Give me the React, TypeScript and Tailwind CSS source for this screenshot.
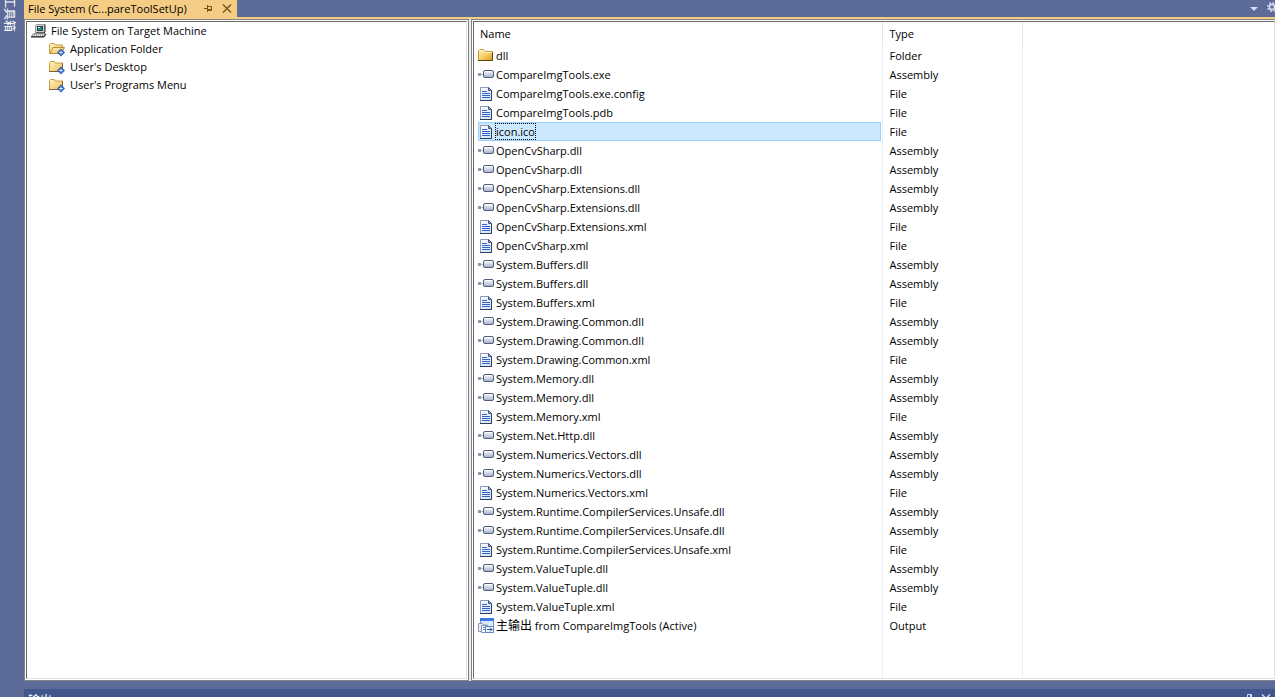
import type { ReactNode } from "react"

type Kind = "folder" | "assembly" | "file" | "output"

interface Item {
  name: ReactNode
  kind: Kind
  selected?: boolean
}

const typeLabels: Record<Kind, string> = {
  folder: "Folder",
  assembly: "Assembly",
  file: "File",
  output: "Output",
}

const items: Item[] = [
  { name: "dll", kind: "folder" },
  { name: "CompareImgTools.exe", kind: "assembly" },
  { name: "CompareImgTools.exe.config", kind: "file" },
  { name: "CompareImgTools.pdb", kind: "file" },
  { name: "icon.ico", kind: "file", selected: true },
  { name: "OpenCvSharp.dll", kind: "assembly" },
  { name: "OpenCvSharp.dll", kind: "assembly" },
  { name: "OpenCvSharp.Extensions.dll", kind: "assembly" },
  { name: "OpenCvSharp.Extensions.dll", kind: "assembly" },
  { name: "OpenCvSharp.Extensions.xml", kind: "file" },
  { name: "OpenCvSharp.xml", kind: "file" },
  { name: "System.Buffers.dll", kind: "assembly" },
  { name: "System.Buffers.dll", kind: "assembly" },
  { name: "System.Buffers.xml", kind: "file" },
  { name: "System.Drawing.Common.dll", kind: "assembly" },
  { name: "System.Drawing.Common.dll", kind: "assembly" },
  { name: "System.Drawing.Common.xml", kind: "file" },
  { name: "System.Memory.dll", kind: "assembly" },
  { name: "System.Memory.dll", kind: "assembly" },
  { name: "System.Memory.xml", kind: "file" },
  { name: "System.Net.Http.dll", kind: "assembly" },
  { name: "System.Numerics.Vectors.dll", kind: "assembly" },
  { name: "System.Numerics.Vectors.dll", kind: "assembly" },
  { name: "System.Numerics.Vectors.xml", kind: "file" },
  { name: "System.Runtime.CompilerServices.Unsafe.dll", kind: "assembly" },
  { name: "System.Runtime.CompilerServices.Unsafe.dll", kind: "assembly" },
  { name: "System.Runtime.CompilerServices.Unsafe.xml", kind: "file" },
  { name: "System.ValueTuple.dll", kind: "assembly" },
  { name: "System.ValueTuple.dll", kind: "assembly" },
  { name: "System.ValueTuple.xml", kind: "file" },
  {
    name: (
      <>
        <span className="text-xs leading-[17px]">主输出</span> from CompareImgTools (Active)
      </>
    ),
    kind: "output",
  },
]

const treeFolders = ["Application Folder", "User's Desktop", "User's Programs Menu"]

// Shared gradients, referenced by id from the icons
function IconDefs() {
  return (
    <svg width="0" height="0" className="absolute" aria-hidden="true">
      <defs>
        <linearGradient id="gold" x1="0" y1="0" x2="1" y2="1">
          <stop offset="0" stopColor="#fff0ae" />
          <stop offset="0.5" stopColor="#f6d067" />
          <stop offset="1" stopColor="#d99a1c" />
        </linearGradient>
        <linearGradient id="pale" x1="0" y1="0" x2="1" y2="1">
          <stop offset="0" stopColor="#fff3c0" />
          <stop offset="1" stopColor="#efc050" />
        </linearGradient>
        <linearGradient id="steel" x1="0" y1="0" x2="0" y2="1">
          <stop offset="0" stopColor="#ffffff" />
          <stop offset="1" stopColor="#a3aec6" />
        </linearGradient>
        <linearGradient id="sheet" x1="0" y1="0" x2="1" y2="1">
          <stop offset="0" stopColor="#ffffff" />
          <stop offset="1" stopColor="#d3dff3" />
        </linearGradient>
      </defs>
    </svg>
  )
}

function Icon({ children }: { children: ReactNode }) {
  return (
    <svg width="16" height="16" viewBox="0 0 16 16" className="shrink-0" aria-hidden="true">
      {children}
    </svg>
  )
}

function FolderIcon() {
  return (
    <Icon>
      <path d="M0.500 12.500v-10l1-1h4l1.500 2h7.500v9z" fill="url(#gold)" stroke="#c39a42" />
      <path d="M1 3h5l1 1.500h7" fill="none" stroke="#fff5cf" />
      <path d="M0 12.500h14.500V4" fill="none" stroke="#5d4516" />
    </Icon>
  )
}

function AssemblyIcon() {
  return (
    <Icon>
      <path d="M0 6h3v3H0z" fill="#8f9ab2" />
      <path d="M3 7.500h2" stroke="#b3bccd" />
      <rect x="5.500" y="3.500" width="10" height="7" rx="1.500" fill="url(#steel)" stroke="#4f5d7c" />
      <path d="M7 4.500h7" stroke="#fff" />
    </Icon>
  )
}

function FileIcon() {
  return (
    <Icon>
      <path d="M2.500 14.500v-13h8l3 3v10z" fill="url(#sheet)" stroke="#8a9bba" />
      <path d="M2 14.500h11.500V4" fill="none" stroke="#2a3d63" />
      <path d="M10.500 1.500v3h3z" fill="#9db1d6" stroke="#3f5b8e" />
      <path d="M4 5.500h5M4 7.500h8M4 9.500h8M4 11.500h8" stroke="#2f60cc" />
    </Icon>
  )
}

function OutputIcon() {
  return (
    <Icon>
      <rect x="2.500" y="0.500" width="13" height="12" fill="#dbe7fb" stroke="#6f93d8" />
      <path d="M2 0h14v3H2z" fill="#3f78e0" />
      <path d="M0.500 13.500v-8h4l1 1.500h4v6.500z" fill="#e9edf3" stroke="#8c98ae" />
      <path d="M3.500 7.500h6v7h-6z" fill="#fff" stroke="#8193b8" />
      <path d="M5 9.500h3M5 11.500h3" stroke="#4a73c4" />
      <path d="M7.500 8.500h8v6h-8z" fill="#f1f6ff" stroke="#6482bb" />
      <path d="M9 11.500h5M12 9.500l2 2-2 2" fill="none" stroke="#2450a8" />
    </Icon>
  )
}

function ComputerIcon() {
  return (
    <Icon>
      <path d="M4.500 9.500v-7l1-1h8v7l-1 1z" fill="#d4d0c8" stroke="#9a9a9a" />
      <path d="M5 10h8l1-1V1.500" fill="none" stroke="#222" />
      <path d="M6 3h6v5H6z" fill="#25444e" />
      <path d="M7 4h4v3H7z" fill="#0d8c90" />
      <path d="M7 4h2v1H7z" fill="#d8ffff" />
      <path d="M2.500 10.500h12l-2 3h-12z" fill="#e3e0da" stroke="#888" />
      <path d="M3 12h9" stroke="#666" strokeDasharray="1 1" />
      <path d="M0 14h13l2-3" fill="none" stroke="#111" />
    </Icon>
  )
}

function SpecialFolderIcon({ open }: { open?: boolean }) {
  return (
    <Icon>
      <path d="M0.500 12.500v-9l1-1h4l1 1.500h7v8.500z" fill="url(#pale)" stroke="#c79c45" />
      {open ? (
        <path d="M1 12.500l3-6h11.500l-3 6z" fill="url(#pale)" stroke="#bb8c34" />
      ) : (
        <path d="M0 12.500h13.500V4" fill="none" stroke="#7c6130" />
      )}
      <path d="M12 7.500l4 4-4 4-4-4z" fill="#2f62b8" />
      <path d="M12 9.500v4M10 11.500h4" stroke="#bcd2fa" />
      <path d="M11.500 11h1v1h-1z" fill="#fff" />
    </Icon>
  )
}

const kindIcons: Record<Kind, () => ReactNode> = {
  folder: FolderIcon,
  assembly: AssemblyIcon,
  file: FileIcon,
  output: OutputIcon,
}

function PinIcon() {
  return (
    <svg width="8" height="7" viewBox="0 0 8 7" aria-hidden="true">
      <path d="M0 3.500h3M3.500 0v7M4 1.500h3.500v4H4M4 4.500h4" fill="none" stroke="#75521f" />
    </svg>
  )
}

function CloseIcon({ className }: { className: string }) {
  return (
    <svg width="10" height="9" viewBox="0 0 10 9" className={className} aria-hidden="true">
      <path d="M1 0.500l8 8M9 0.500l-8 8" fill="none" stroke="currentColor" strokeWidth="1.400" />
    </svg>
  )
}

function GearIcon() {
  return (
    <svg width="10" height="10" viewBox="0 0 10 10" className="shrink-0" aria-hidden="true">
      <circle cx="5" cy="5" r="4.200" fill="none" stroke="#d5dcf3" strokeWidth="1.600" strokeDasharray="1.650 1.650" />
      <circle cx="5" cy="5" r="2.600" fill="none" stroke="#d5dcf3" strokeWidth="1.600" />
    </svg>
  )
}

function Pane({ className, children }: { className: string; children: ReactNode }) {
  return (
    <section className={`flex border border-[#838383] bg-white p-px ${className}`}>
      <div className="flex min-w-0 flex-1 border border-t-[#696969] border-r-[#e3e3e3] border-b-[#e3e3e3] border-l-[#696969]">
        {children}
      </div>
    </section>
  )
}

function FolderTree() {
  return (
    <ul className="flex-1 pl-1 leading-[18px] whitespace-nowrap">
      <li>
        <div className="flex items-center gap-1">
          <ComputerIcon />
          <span>File System on Target Machine</span>
        </div>
        <ul className="pl-[18px]">
          {treeFolders.map((name, i) => (
            <li key={name} className="flex items-center gap-[5px]">
              <SpecialFolderIcon open={i === 0} />
              <span>{name}</span>
            </li>
          ))}
        </ul>
      </li>
    </ul>
  )
}

function FileTable() {
  return (
    <table className="h-full w-full table-fixed border-collapse whitespace-nowrap">
      <colgroup>
        <col className="w-[408px]" />
        <col className="w-[140px]" />
        <col />
      </colgroup>
      <thead>
        <tr className="h-6 text-left">
          <th className="border-r border-[#e5e5e5] p-0 pl-1.5 font-normal">Name</th>
          <th className="border-r border-[#e5e5e5] p-0 pl-[7px] font-normal">Type</th>
          <td />
        </tr>
      </thead>
      <tbody>
        {items.map((item, i) => {
          const ItemIcon = kindIcons[item.kind]
          return (
            <tr key={i} className="h-[19px]">
              <td className="border-r border-[#e6f0fd] p-0 pr-px pl-1">
                <div
                  className={`flex h-[19px] items-center gap-px ${item.selected ? "bg-[#cce8ff] outline-1 -outline-offset-1 outline-[#99d1ff]" : ""}`}
                >
                  <ItemIcon />
                  <span
                    className={`px-px leading-[17px] ${item.selected ? "outline-1 -outline-offset-1 outline-dotted outline-black" : ""}`}
                  >
                    {item.name}
                  </span>
                </div>
              </td>
              <td className="border-r border-[#e6f0fd] p-0 pl-[7px]">
                <div className="flex h-[19px] items-center leading-[17px]">{typeLabels[item.kind]}</div>
              </td>
              <td />
            </tr>
          )
        })}
        <tr>
          <td className="border-r border-[#e6f0fd]" />
          <td className="border-r border-[#e6f0fd]" />
          <td />
        </tr>
      </tbody>
    </table>
  )
}

export default function App() {
  return (
    <div className="flex h-screen overflow-hidden bg-[#5d6b99] font-['Open_Sans','Noto_Sans_CJK_SC',sans-serif] text-[11px] text-black">
      <IconDefs />
      <aside className="flex w-6 shrink-0 items-start justify-center overflow-hidden pr-1.5">
        <button className="-mt-1 size-9 shrink-0 rotate-90 text-xs text-white">工具箱</button>
      </aside>

      <main className="flex min-w-0 flex-1 flex-col">
        <header className="flex h-[19px] shrink-0 items-start justify-between border-b-2 border-[#f5cc84]">
          <div className="flex h-[17px] w-[213px] items-center bg-[#f5cc84] pr-[5px] pl-1 leading-4 whitespace-nowrap">
            <span>File System (C...pareToolSetUp)</span>
            <button aria-label="Pin tab" className="ml-auto">
              <PinIcon />
            </button>
            <button aria-label="Close tab" className="ml-2.5">
              <CloseIcon className="text-[#75521f]" />
            </button>
          </div>
          <div className="-mr-0.5 flex h-[14px] items-center gap-[9px]">
            <button aria-label="Window list" className="pt-1">
              <svg width="8" height="4" viewBox="0 0 8 4" aria-hidden="true">
                <path d="M0 0h8L4 4z" fill="#d5dcf3" />
              </svg>
            </button>
            <button aria-label="Tab options">
              <GearIcon />
            </button>
          </div>
        </header>

        <div className="flex min-h-0 flex-1 gap-0.5 bg-[#e8ebf1]">
          <Pane className="w-[445px] shrink-0">
            <FolderTree />
          </Pane>
          <Pane className="min-w-0 flex-1 border-r-0 pr-0">
            <FileTable />
          </Pane>
        </div>

        <footer className="flex h-4 shrink-0 items-end">
          <div className="flex h-2 flex-1 items-start justify-between overflow-hidden bg-[#40568d] pt-1 pr-1 pl-1 text-xs leading-4 text-white">
            <span>输出</span>
            <span className="flex gap-2 pt-px">
              <svg width="7" height="10" viewBox="0 0 7 10" aria-hidden="true">
                <path d="M1.500 6V0.500h4V6M4.500 1v5M0 6.500h7M3.500 7v3" fill="none" stroke="#d5dcf3" />
              </svg>
              <CloseIcon className="text-[#d5dcf3]" />
            </span>
          </div>
        </footer>
      </main>
    </div>
  )
}
